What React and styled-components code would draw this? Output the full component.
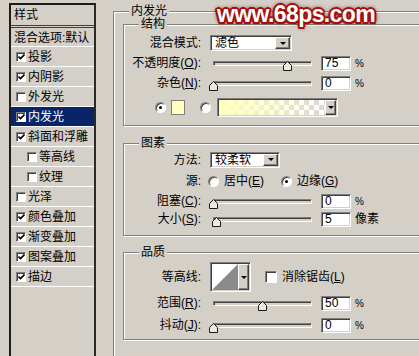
import React from "react";
import styled, { createGlobalStyle } from "styled-components";

const GlobalStyle = createGlobalStyle`
  html, body {
    margin: 0;
    padding: 0;
    background: #d4d0c8;
    overflow: hidden;
  }
  body {
    font-family: "Liberation Sans", "Noto Sans CJK SC", sans-serif;
    font-size: 12px;
    line-height: 14px;
    color: #000;
  }
`;

const Window = styled.div`
  position: relative;
  display: flex;
  width: 419px;
  height: 356px;
  overflow: hidden;
  background: #d4d0c8;
`;

/* ---------- left style list ---------- */

const StyleList = styled.div`
  flex: none;
  width: 83px;
  height: 400px;
  margin: 3px 0 0 9px;
  border: 2px solid #1c1c1c;
  border-right-color: #2a2a2a;
`;

const ListHeader = styled.div`
  height: 20px;
  padding-left: 3px;
  display: flex;
  align-items: center;
  border-bottom: 3px double #404040;
`;

const ListItem = styled.div`
  height: ${(p) => p.$h || 19}px;
  display: flex;
  align-items: center;
  padding-left: ${(p) => p.$pl}px;
  padding-top: 1px;
  box-sizing: border-box;
  border-bottom: 1px solid #fff;
  background: ${(p) => (p.$active ? "#0a246a" : "transparent")};
  color: ${(p) => (p.$active ? "#fff" : "#000")};
  white-space: nowrap;
`;

const Check = styled.span`
  flex: none;
  width: ${(p) => p.$size || 10}px;
  height: ${(p) => p.$size || 10}px;
  margin-left: ${(p) => p.$ml || 0}px;
  margin-right: ${(p) => (p.$mr === undefined ? 2 : p.$mr)}px;
  box-sizing: border-box;
  background: #fff;
  border-top: 1px solid #808080;
  border-left: 1px solid #808080;
  border-bottom: 1px solid #fff;
  border-right: 1px solid #fff;
  box-shadow: inset 1px 1px #404040;
  display: flex;
  align-items: center;
  justify-content: center;
`;

/* ---------- right side ---------- */

const Pane = styled.div`
  flex: 1;
  padding: 11px 0 0 17px;
`;

const OuterGroup = styled.div`
  position: relative;
  width: 330px;
  height: 400px;
  box-sizing: border-box;
  padding: 12px 0 0 9px;
  border: 1px solid #808080;
  box-shadow: inset 1px 1px #fff, 1px 1px #fff;
`;

const Group = styled.div`
  position: relative;
  width: 310px;
  margin-top: ${(p) => p.$mt || 0}px;
  padding: ${(p) => p.$pt}px 0 ${(p) => p.$pb}px 0;
  border: 1px solid #808080;
  box-shadow: inset 1px 1px #fff, 1px 1px #fff;
`;

const GroupTitle = styled.span`
  position: absolute;
  top: -8px;
  left: 15px;
  padding: 0 2px;
  background: #d4d0c8;
  line-height: 14px;
`;

const Row = styled.div`
  display: flex;
  align-items: center;
  height: ${(p) => p.$h}px;
  padding-left: ${(p) => p.$pl || 0}px;
`;

const Label = styled.span`
  flex: none;
  width: 77px;
  text-align: right;
  white-space: nowrap;
`;

const Control = styled.div`
  display: flex;
  align-items: center;
  margin-left: ${(p) => (p.$ml === undefined ? 9 : p.$ml)}px;
`;

const sunken = `
  box-sizing: border-box;
  border-top: 1px solid #808080;
  border-left: 1px solid #808080;
  border-bottom: 1px solid #fff;
  border-right: 1px solid #fff;
  box-shadow: inset 1px 1px #404040, inset -1px -1px #d4d0c8;
`;

const Select = styled.div`
  ${sunken}
  width: ${(p) => p.$w}px;
  height: 16px;
  padding: 1px;
  background: #fff;
  display: flex;
`;

const SelectText = styled.span`
  flex: 1;
  padding-left: 3px;
  line-height: 13px;
`;

const DropBtn = styled.span`
  flex: none;
  width: ${(p) => p.$w || 15}px;
  box-sizing: border-box;
  background: #d4d0c8;
  border-top: 1px solid #fff;
  border-left: 1px solid #fff;
  border-right: 1px solid #404040;
  border-bottom: 1px solid #404040;
  box-shadow: inset -1px -1px #808080;
  display: flex;
  align-items: center;
  justify-content: center;
  &::after {
    content: "";
    border-left: 3px solid transparent;
    border-right: 3px solid transparent;
    border-top: 3px solid #000;
  }
`;

const Track = styled.div`
  position: relative;
  flex: none;
  width: 99px;
  height: 5px;
  margin-left: 3px;
  box-sizing: border-box;
  border-top: 1px solid #808080;
  border-left: 1px solid #808080;
  border-bottom: 1px solid #fff;
  border-right: 1px solid #fff;
  box-shadow: inset 1px 1px #404040;
  background: #d4d0c8;
`;

const ThumbShape = styled.svg`
  position: absolute;
  top: -1px;
  width: 9px;
  height: 10px;
`;

const NumBox = styled.div`
  ${sunken}
  flex: none;
  width: 30px;
  height: 15px;
  margin-left: 9px;
  padding-left: 3px;
  background: #fff;
  line-height: 13px;
  font-size: 12px;
`;

const Unit = styled.span`
  margin-left: 4px;
  font-size: ${(p) => p.$size || 10}px;
  align-self: ${(p) => (p.$top ? "flex-start" : "center")};
  margin-top: ${(p) => (p.$top ? 2 : 0)}px;
`;

const Radio = styled.span`
  flex: none;
  width: 11px;
  height: 11px;
  margin-left: ${(p) => p.$ml || 0}px;
  border-radius: 50%;
  box-sizing: border-box;
  background: #fff;
  border: 1px solid;
  border-color: #808080 #fff #fff #808080;
  box-shadow: inset 1px 1px #404040;
  display: flex;
  align-items: center;
  justify-content: center;
  &::after {
    content: "";
    width: 3px;
    height: 3px;
    border-radius: 50%;
    background: ${(p) => (p.$on ? "#000" : "transparent")};
  }
`;

const RadioText = styled.span`
  margin-left: 5px;
  white-space: nowrap;
`;

const Swatch = styled.span`
  flex: none;
  width: 14px;
  height: 15px;
  margin-left: 5px;
  box-sizing: border-box;
  border: 1px solid #808080;
  background: #ffffc0;
`;

const GradientBox = styled.div`
  ${sunken}
  flex: none;
  width: 121px;
  height: 19px;
  margin-left: 6px;
  padding: 1px;
  display: flex;
`;

const GradientFill = styled.span`
  flex: 1;
  background: linear-gradient(to right, #ffffc0 0%, rgba(255, 255, 192, 0.6) 45%, rgba(255, 255, 192, 0) 100%),
    repeating-conic-gradient(#d8d8d8 0% 25%, #ffffff 0% 50%) 0 0 / 10px 10px;
`;

const ContourBox = styled.div`
  ${sunken}
  flex: none;
  width: 41px;
  height: 30px;
  padding: 1px;
  display: flex;
`;

const Mn = styled.u`
  text-decoration-thickness: 1px;
  text-underline-offset: 1px;
`;

const Watermark = styled.div`
  position: absolute;
  left: 217px;
  top: 3px;
  font-family: "Liberation Sans", sans-serif;
  font-weight: bold;
  font-size: 23px;
  line-height: 23px;
  letter-spacing: -0.6px;
  color: #fff;
  pointer-events: none;
  text-shadow: 2px 0 0 #a3100c, -2px 0 0 #a3100c, 0 2px 0 #a3100c, 0 -2px 0 #a3100c,
    1.5px 1.5px 0 #a3100c, -1.5px -1.5px 0 #a3100c, 1.5px -1.5px 0 #a3100c,
    -1.5px 1.5px 0 #a3100c, 0 0 4px #7d0a06, 0 0 5px #7d0a06;
`;

function Thumb({ pct }) {
  return (
    <ThumbShape viewBox="0 0 9 10" style={{ left: pct * 99 - 5.5 }}>
      <polygon
        points="4.5,0.5 8.5,4.5 8.5,9.5 0.5,9.5 0.5,4.5"
        fill="#ece9e2"
        stroke="#1a1a1a"
        strokeWidth="1"
      />
    </ThumbShape>
  );
}

function SliderRow({ h, label, mn, pct, value, unit }) {
  return (
    <Row $h={h}>
      <Label>
        {label}(<Mn>{mn}</Mn>):
      </Label>
      <Control>
        <Track>
          <Thumb pct={pct} />
        </Track>
        <NumBox>{value}</NumBox>
        {unit === "%" ? <Unit $top>%</Unit> : <Unit $size={12}>{unit}</Unit>}
      </Control>
    </Row>
  );
}

const tick = (
  <svg width="7" height="6" viewBox="0 0 7 6">
    <polyline points="0.5,2.5 2.5,4.5 6.5,0.5" fill="none" stroke="#000" strokeWidth="1.6" />
  </svg>
);

const styles = [
  { name: "投影", on: true },
  { name: "内阴影", on: true },
  { name: "外发光", on: false },
  { name: "内发光", on: true, active: true },
  { name: "斜面和浮雕", on: true },
  { name: "等高线", on: false, sub: true },
  { name: "纹理", on: false, sub: true },
  { name: "光泽", on: false },
  { name: "颜色叠加", on: true },
  { name: "渐变叠加", on: true },
  { name: "图案叠加", on: true },
  { name: "描边", on: true },
];

export default function App() {
  return (
    <>
      <GlobalStyle />
      <Window>
        <StyleList>
          <ListHeader>样式</ListHeader>
          <ListItem $h={19} $pl={3}>
            混合选项:默认
          </ListItem>
          {styles.map((s) => (
            <ListItem key={s.name} $h={20} $pl={s.sub ? 16 : 5} $active={s.active}>
              <Check>{s.on && tick}</Check>
              {s.name}
            </ListItem>
          ))}
        </StyleList>

        <Pane>
          <OuterGroup>
            <GroupTitle>内发光</GroupTitle>

            <Group $pt={8} $pb={4}>
              <GroupTitle>结构</GroupTitle>
              <Row $h={20}>
                <Label>混合模式:</Label>
                <Control>
                  <Select $w={82}>
                    <SelectText>滤色</SelectText>
                    <DropBtn />
                  </Select>
                </Control>
              </Row>
              <SliderRow h={20} label="不透明度" mn="O" pct={0.75} value="75" unit="%" />
              <SliderRow h={20} label="杂色" mn="N" pct={0} value="0" unit="%" />
              <Row $h={28} $pl={31}>
                <Radio $on />
                <Swatch />
                <Radio $ml={15} />
                <GradientBox>
                  <GradientFill />
                  <DropBtn $w={11} />
                </GradientBox>
              </Row>
            </Group>

            <Group $mt={17} $pt={5} $pb={7}>
              <GroupTitle>图素</GroupTitle>
              <Row $h={21}>
                <Label>方法:</Label>
                <Control>
                  <Select $w={70}>
                    <SelectText>较柔软</SelectText>
                    <DropBtn />
                  </Select>
                </Control>
              </Row>
              <Row $h={22}>
                <Label>源:</Label>
                <Control $ml={7}>
                  <Radio />
                  <RadioText>
                    居中(<Mn>E</Mn>)
                  </RadioText>
                  <Radio $on $ml={17} />
                  <RadioText>
                    边缘(<Mn>G</Mn>)
                  </RadioText>
                </Control>
              </Row>
              <SliderRow h={18} label="阻塞" mn="C" pct={0} value="0" unit="%" />
              <SliderRow h={18} label="大小" mn="S" pct={0.04} value="5" unit="像素" />
            </Group>

            <Group $mt={16} $pt={9} $pb={3}>
              <GroupTitle>品质</GroupTitle>
              <Row $h={30}>
                <Label>等高线:</Label>
                <Control>
                  <ContourBox>
                    <svg width="26" height="26" viewBox="0 0 26 26">
                      <rect width="26" height="26" fill="#fff" />
                      <polygon points="0,26 26,0 26,26" fill="#8a8a8a" />
                    </svg>
                    <DropBtn $w={11} />
                  </ContourBox>
                  <Check $size={12} $ml={14} $mr={0} />
                  <RadioText>
                    消除锯齿(<Mn>L</Mn>)
                  </RadioText>
                </Control>
              </Row>
              <SliderRow h={22} label="范围" mn="R" pct={0.5} value="50" unit="%" />
              <SliderRow h={22} label="抖动" mn="J" pct={0} value="0" unit="%" />
            </Group>
          </OuterGroup>
        </Pane>

        <Watermark>www.68ps.com</Watermark>
      </Window>
    </>
  );
}
